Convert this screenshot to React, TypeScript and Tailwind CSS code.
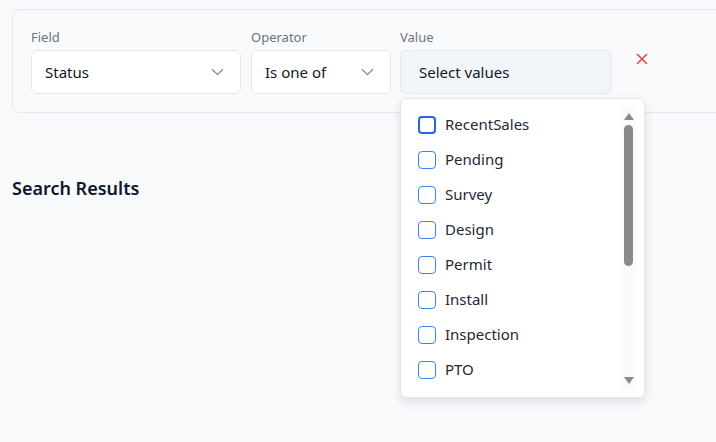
import React from "react";

const statuses = ["RecentSales", "Pending", "Survey", "Design", "Permit", "Install", "Inspection", "PTO"];

function Chevron() {
  return (
    <svg width="13" height="8" viewBox="0 0 13 8" fill="none" className="shrink-0">
      <path d="M1 1.2 6.5 6.5 12 1.2" stroke="#8b919b" strokeWidth="1.3" />
    </svg>
  );
}

function SelectBox({ label, value, width }: { label: string; value: string; width: string }) {
  return (
    <div className={width}>
      <div className="text-[13px] leading-[18px] text-[#6b7280] mb-[4px]">{label}</div>
      <div className="h-[44px] rounded-md border border-[#e2e8f0] bg-white flex items-center justify-between pl-[13px] pr-[16px] text-[15px] text-[#111827]">
        <span>{value}</span>
        <Chevron />
      </div>
    </div>
  );
}

export default function App() {
  return (
    <div
      className="min-h-screen w-full overflow-hidden bg-[#f8fafc] pt-[9px] pl-3"
      style={{ fontFamily: '"Noto Sans", "Open Sans", sans-serif' }}
    >
      <div className="w-[740px] rounded-lg border border-[#e2e8f0] bg-[#f8fafc] pt-[18px] pb-[18px] pl-[18px]">
        <div className="flex gap-[10px] items-start">
          <SelectBox label="Field" value="Status" width="w-[210px]" />
          <SelectBox label="Operator" value="Is one of" width="w-[140px]" />
          <div className="w-[212px] -ml-px relative">
            <div className="text-[13px] leading-[18px] text-[#6b7280] mb-[4px]">Value</div>
            <div className="h-[44px] rounded-md border border-[#e2e8f0] bg-[#f1f5f9] flex items-center pl-[18px] text-[15px] text-[#111827]">
              Select values
            </div>
            <div className="absolute left-0 top-[70px] w-[245px] h-[300px] rounded-md border border-[#e5e7eb] bg-white shadow-[0_4px_10px_rgba(15,23,42,0.12)] z-10">
              <div className="pt-[8px] pl-[17px]">
                {statuses.map((s, i) => (
                  <div key={s} className="h-[35px] flex items-center gap-[9px]">
                    <span
                      className={
                        i === 0
                          ? "w-[18px] h-[18px] rounded-[4px] border-2 border-[#2563eb] bg-white"
                          : "w-[18px] h-[18px] rounded-[4px] border-[1.5px] border-[#3b82f6] bg-white"
                      }
                    />
                    <span className="text-[15px] text-[#1f2937]">{s}</span>
                  </div>
                ))}
              </div>
              <div className="absolute right-[8px] top-[8px] bottom-[8px] w-[15px] bg-[#fafafa] flex flex-col items-center">
                <svg width="10" height="7" viewBox="0 0 10 7" className="mt-[6px]">
                  <path d="M5 0 10 7H0Z" fill="#8a8a8a" />
                </svg>
                <div className="mt-[5px] w-[9px] h-[141px] rounded-full bg-[#8a8a8a]" />
                <div className="flex-1" />
                <svg width="10" height="7" viewBox="0 0 10 7" className="mb-[5px]">
                  <path d="M0 0H10L5 7Z" fill="#8a8a8a" />
                </svg>
              </div>
            </div>
          </div>
          <div className="pt-[25px] pl-[14px]">
            <svg width="12" height="12" viewBox="0 0 12 12">
              <path d="M1 1 11 11M11 1 1 11" stroke="#ef4444" strokeWidth="1.6" />
            </svg>
          </div>
        </div>
      </div>
      <h2 className="mt-[63px] text-[18px] leading-6 font-semibold text-[#0f172a]">Search Results</h2>
    </div>
  );
}
